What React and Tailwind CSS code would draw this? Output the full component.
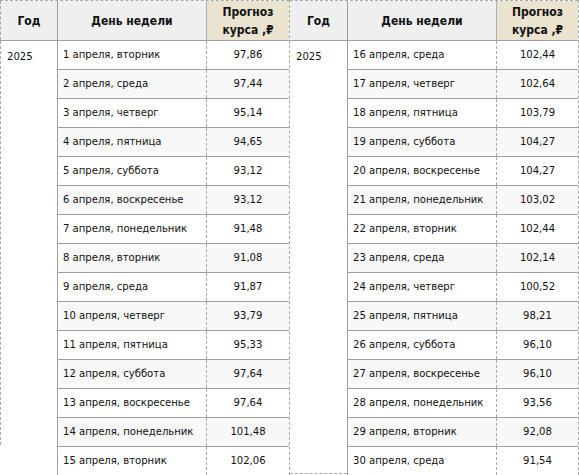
import React from "react";

const leftRows = [
  ["1 апреля, вторник", "97,86"],
  ["2 апреля, среда", "97,44"],
  ["3 апреля, четверг", "95,14"],
  ["4 апреля, пятница", "94,65"],
  ["5 апреля, суббота", "93,12"],
  ["6 апреля, воскресенье", "93,12"],
  ["7 апреля, понедельник", "91,48"],
  ["8 апреля, вторник", "91,08"],
  ["9 апреля, среда", "91,87"],
  ["10 апреля, четверг", "93,79"],
  ["11 апреля, пятница", "95,33"],
  ["12 апреля, суббота", "97,64"],
  ["13 апреля, воскресенье", "97,64"],
  ["14 апреля, понедельник", "101,48"],
  ["15 апреля, вторник", "102,06"],
];

const rightRows = [
  ["16 апреля, среда", "102,44"],
  ["17 апреля, четверг", "102,64"],
  ["18 апреля, пятница", "103,79"],
  ["19 апреля, суббота", "104,27"],
  ["20 апреля, воскресенье", "104,27"],
  ["21 апреля, понедельник", "103,02"],
  ["22 апреля, вторник", "102,44"],
  ["23 апреля, среда", "102,14"],
  ["24 апреля, четверг", "100,52"],
  ["25 апреля, пятница", "98,21"],
  ["26 апреля, суббота", "96,10"],
  ["27 апреля, воскресенье", "96,10"],
  ["28 апреля, понедельник", "93,56"],
  ["29 апреля, вторник", "92,08"],
  ["30 апреля, среда", "91,54"],
];

const ForecastTable = ({ rows, first }) => {
  return (
    <div className={first ? "flex flex-col w-[290px] border-r border-dashed border-[#a8a8a8]" : "flex flex-col w-[289px] border-r border-dashed border-[#a8a8a8]"}>
      {/* HEADER */}
      <div className="border-t border-dashed border-[#a8a8a8]">
        <div className="flex h-[40px] border-b border-[#a0a0a0] font-bold text-[12px]">
          <div className={first ? "w-[58px] bg-[#efefef] border-l border-dashed border-[#a8a8a8]" : "w-[58px] bg-[#efefef]"}>
            <div className="h-full flex items-center justify-center border-r border-[#a0a0a0]">Год</div>
          </div>
          <div className="w-[149px] bg-[#efefef] border-r border-[#b0b0b0] flex items-center justify-center">
            День недели
          </div>
          <div className="flex-1 bg-[#e9e3cf] flex flex-col items-center justify-center leading-[18px]">
            <span>Прогноз</span>
            <span>курса ,₽</span>
          </div>
        </div>
      </div>

      {/* BODY */}
      <div className="flex text-[11.2px]">
        {/* YEAR */}
        <div className="w-[58px] border-r border-[#a0a0a0]">
          <div
            className={
              first
                ? "h-[404px] border-l border-dashed border-[#a8a8a8] pl-[6px] pt-[8px]"
                : "h-[433px] border-b border-dashed border-[#a8a8a8] pl-[6px] pt-[8px]"
            }
          >
            2025
          </div>
        </div>

        {/* DAYS + VALUES */}
        <div className="flex-1 flex flex-col">
          {rows.map(([day, value], i) => (
            <div
              key={day}
              className={i % 2 === 1 ? "flex h-[29px] border-b border-[#a0a0a0] bg-[#f8f8f8]" : "flex h-[29px] border-b border-[#a0a0a0] bg-white"}
            >
              <div className="w-[149px] border-r border-dashed border-[#a8a8a8] flex items-center pl-[5px]">
                {day}
              </div>
              <div className="flex-1 flex items-center justify-center">{value}</div>
            </div>
          ))}
        </div>
      </div>
    </div>
  );
};

export default function App() {
  return (
    <div
      className="flex w-[579px] h-[475px] overflow-hidden bg-white text-[12px] text-[#111]"
      style={{ fontFamily: '"DejaVu Sans Condensed", Tahoma, "DejaVu Sans", sans-serif' }}
    >
      <ForecastTable rows={leftRows} first />
      <ForecastTable rows={rightRows} />
    </div>
  );
}
